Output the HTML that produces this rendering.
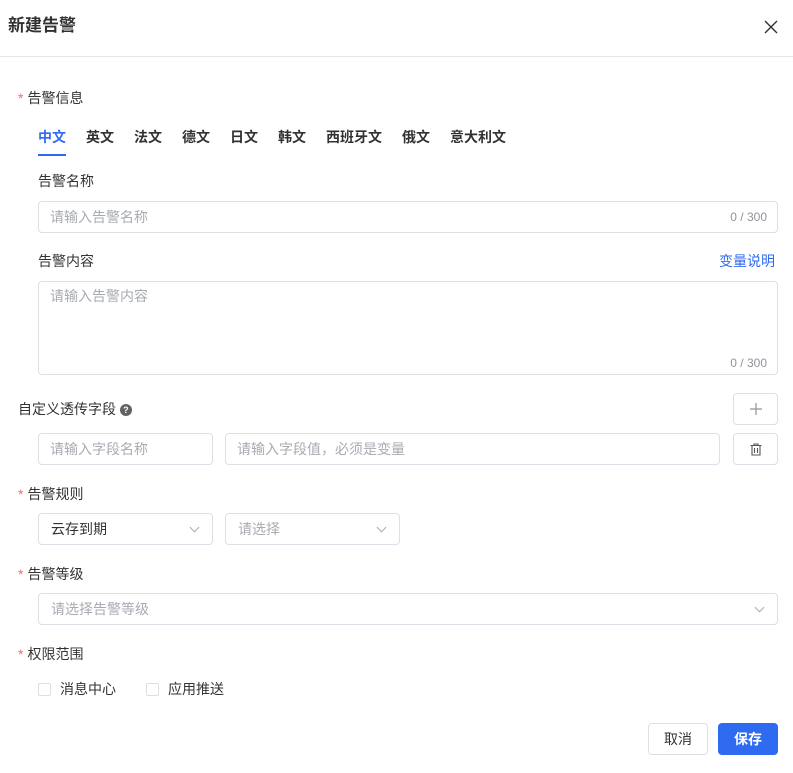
<!DOCTYPE html>
<html><head><meta charset="utf-8"><style>
*{box-sizing:border-box;margin:0;padding:0}
body{width:793px;height:773px;background:#fff;font-family:"Liberation Sans","Noto Sans CJK SC",sans-serif;font-size:14px;color:#333;position:relative;overflow:hidden}
.a{position:absolute;white-space:nowrap;line-height:18px}
.box{position:absolute;border:1px solid #dcdfe6;border-radius:4px;background:#fff}
.ph{color:#a8abb2}
.req{color:#f56c6c;margin-right:4px}
.cnt{position:absolute;font-size:12px;color:#909399}
.chev{position:absolute;width:7px;height:7px;border-right:1px solid #a8abb2;border-bottom:1px solid #a8abb2;transform:rotate(45deg)}
.tab{position:absolute;top:128px;font-weight:bold;color:#303133;font-size:14px;line-height:18px}
.cb{position:absolute;width:13px;height:13px;border:1px solid #dcdfe6;border-radius:2px}
</style></head><body>
<div class="a" style="left:8px;top:16px;font-size:17px;font-weight:bold;color:#303133;line-height:20px">新建告警</div>
<svg class="a" style="left:764px;top:20px" width="14" height="14"><path d="M1 1L13 13M13 1L1 13" stroke="#303133" stroke-width="1.4"/></svg>
<div class="a" style="left:0;top:56px;width:793px;height:1px;background:#e4e7ed"></div>

<div class="a" style="left:18px;top:89px"><span class="req">*</span>告警信息</div>
<div class="tab" style="left:38px;color:#2f6bf0">中文</div>
<div class="a" style="left:38px;top:154px;width:28px;height:2px;background:#2f6bf0"></div>
<div class="tab" style="left:86px">英文</div>
<div class="tab" style="left:134px">法文</div>
<div class="tab" style="left:182px">德文</div>
<div class="tab" style="left:230px">日文</div>
<div class="tab" style="left:278px">韩文</div>
<div class="tab" style="left:326px">西班牙文</div>
<div class="tab" style="left:402px">俄文</div>
<div class="tab" style="left:450px">意大利文</div>

<div class="a" style="left:38px;top:172px">告警名称</div>
<div class="box" style="left:38px;top:201px;width:740px;height:32px"><span class="a ph" style="left:11px;top:6px">请输入告警名称</span><span class="cnt" style="right:10px;top:8px">0 / 300</span></div>

<div class="a" style="left:38px;top:252px">告警内容</div>
<div class="a" style="left:719px;top:252px;color:#2f6bf0">变量说明</div>
<div class="box" style="left:38px;top:281px;width:740px;height:94px"><span class="a ph" style="left:11px;top:5px">请输入告警内容</span><span class="cnt" style="right:10px;top:74px">0 / 300</span></div>

<div class="a" style="left:18px;top:400px">自定义透传字段 <span style="display:inline-block;width:12px;height:12px;border-radius:50%;background:#606266;color:#fff;font-size:9px;text-align:center;line-height:12px;font-weight:bold;vertical-align:1px">?</span></div>
<div class="box" style="left:733px;top:393px;width:45px;height:32px"><svg class="a" style="left:15px;top:8px" width="14" height="14"><path d="M7 1V13M1 7H13" stroke="#909399" stroke-width="1.2"/></svg></div>
<div class="box" style="left:38px;top:433px;width:175px;height:32px"><span class="a ph" style="left:11px;top:6px">请输入字段名称</span></div>
<div class="box" style="left:225px;top:433px;width:495px;height:32px"><span class="a ph" style="left:11px;top:6px">请输入字段值，必须是变量</span></div>
<div class="box" style="left:733px;top:433px;width:45px;height:32px"><svg class="a" style="left:16px;top:9px" width="12" height="13"><path d="M0.5 2.5H11.5M4 2.5V1H8V2.5M2 2.5V12H10V2.5M4.5 5V10M7.5 5V10" stroke="#555" fill="none" stroke-width="1.1"/></svg></div>

<div class="a" style="left:18px;top:485px"><span class="req">*</span>告警规则</div>
<div class="box" style="left:38px;top:513px;width:175px;height:32px"><span class="a" style="left:12px;top:6px;color:#333">云存到期</span><span class="chev" style="right:14px;top:10px"></span></div>
<div class="box" style="left:225px;top:513px;width:175px;height:32px"><span class="a ph" style="left:12px;top:6px">请选择</span><span class="chev" style="right:14px;top:10px"></span></div>

<div class="a" style="left:18px;top:565px"><span class="req">*</span>告警等级</div>
<div class="box" style="left:38px;top:593px;width:740px;height:32px"><span class="a ph" style="left:12px;top:6px">请选择告警等级</span><span class="chev" style="right:14px;top:10px"></span></div>

<div class="a" style="left:18px;top:645px"><span class="req">*</span>权限范围</div>
<div class="cb" style="left:38px;top:683px"></div><div class="a" style="left:60px;top:680px">消息中心</div>
<div class="cb" style="left:146px;top:683px"></div><div class="a" style="left:168px;top:680px">应用推送</div>

<div class="box" style="left:648px;top:723px;width:60px;height:32px;text-align:center;line-height:30px;color:#333">取消</div>
<div class="a" style="left:718px;top:723px;width:60px;height:32px;background:#2f6bf0;border-radius:4px;color:#fff;text-align:center;line-height:32px;font-weight:bold">保存</div>
</body></html>
